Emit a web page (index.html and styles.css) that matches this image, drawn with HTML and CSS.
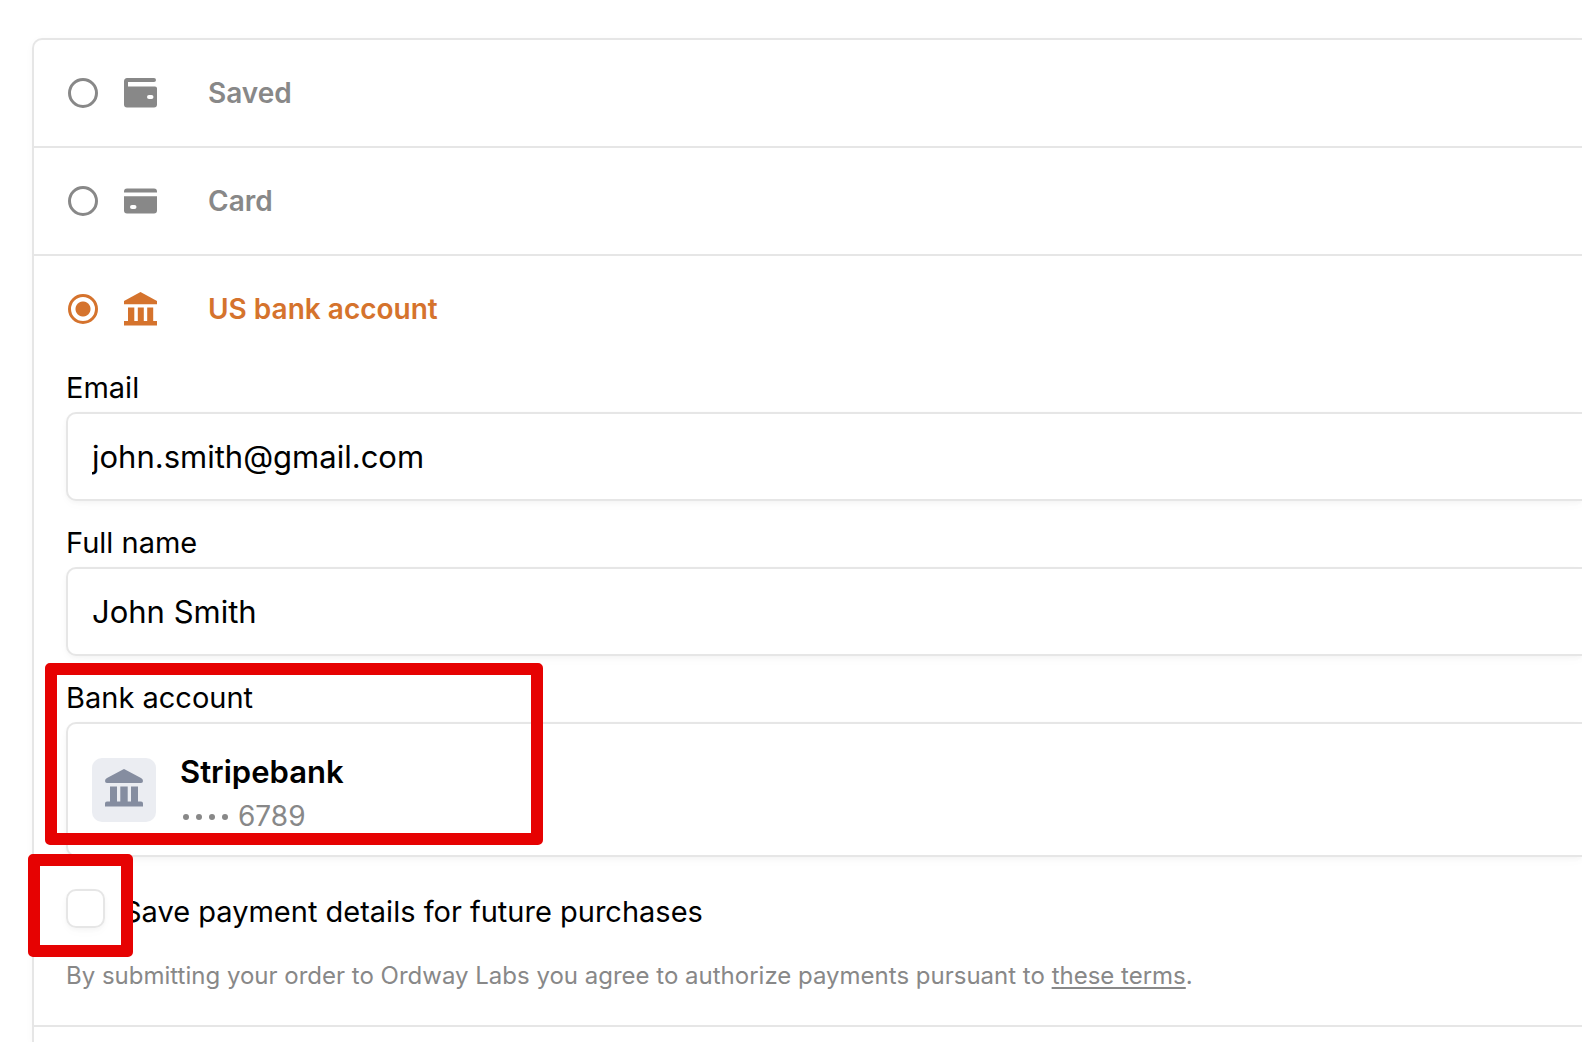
FILE: index.html
```html
<!DOCTYPE html>
<html lang="en">
<head>
<meta charset="utf-8">
<title>Payment method</title>
<link rel="stylesheet" href="styles.css">
</head>
<body>
<form class="panel">
  <label class="method">
    <input class="radio" type="radio" name="method">
    <svg class="icon" viewBox="0 0 34 36"><path d="M3.500 3H30a1.700 1.700 0 0 1 0 4H4V11.500H31A2.200 2.200 0 0 1 33 14V29.500A3 3 0 0 1 30 32.500H3A3 3 0 0 1 0 29.500V6A3 3 0 0 1 3.500 3ZM25 20a2 2 0 0 0 0 4h2.500a2 2 0 0 0 0-4Z" fill-rule="evenodd"/></svg>
    <span>Saved</span>
  </label>
  <label class="method">
    <input class="radio" type="radio" name="method">
    <svg class="icon" viewBox="0 0 34 36"><path d="M3 5.500H30A3 3 0 0 1 33 8.500V9.500H0V8.500A3 3 0 0 1 3 5.500ZM0 13.300H33V27.500A3 3 0 0 1 30 30.500H3A3 3 0 0 1 0 27.500ZM8 22a2 2 0 0 0 0 4h2.500a2 2 0 0 0 0-4Z" fill-rule="evenodd"/></svg>
    <span>Card</span>
  </label>
  <section class="open-method">
    <label class="method selected">
      <input class="radio" type="radio" name="method" checked>
      <svg class="icon" viewBox="0 0 34 36"><path d="M16.500 1 33 10V13.300H0V10Z"/><path d="M4 16.500h6.300V30h3.500V16.500h6V30h3.400V16.500h6V30H33v4.600H0V30h4Z"/></svg>
      <span>US bank account</span>
    </label>
    <div class="fields">
      <div class="field">
        <label class="label" for="email">Email</label>
        <input class="box text" id="email" type="text" value="john.smith@gmail.com">
      </div>
      <div class="field">
        <label class="label" for="name">Full name</label>
        <input class="box text" id="name" type="text" value="John Smith">
      </div>
      <div class="field">
        <div class="label">Bank account</div>
        <div class="box account">
          <div class="badge"><svg class="badge-icon" viewBox="0 0 38 42"><path d="M18 .400Q19-.200 20 .400L36 9Q38 10.200 38 12T36 14H2Q0 14 0 12T2 9Z"/><path d="M5 17.500h7v15h3.300v-15h7.400v15H26v-15h7v15h3q2 0 2 2v3H0v-3q0-2 2-2h3Z"/></svg></div>
          <div>
            <div class="bank-name">Stripebank</div>
            <div class="digits"><span class="dots"><i></i><i></i><i></i><i></i></span>6789</div>
          </div>
        </div>
        <div class="highlight highlight-account"></div>
      </div>
    </div>
    <div class="save">
      <input class="checkbox" id="save" type="checkbox">
      <label class="save-label" for="save">Save payment details for future purchases</label>
      <div class="highlight highlight-save"></div>
    </div>
    <p class="terms">By submitting your order to Ordway Labs you agree to authorize payments pursuant to <a href="#">these terms</a>.</p>
  </section>
</form>
</body>
</html>
```
FILE: styles.css
```css
* { box-sizing: border-box; }

body {
  margin: 0;
  padding: 38px 0 0 32px;
  min-height: 100vh;
  display: flex;
  background: #fff;
  color: #000;
  font-family: Inter, "Liberation Sans", sans-serif;
}

.panel {
  flex: 1;
  border: 2px solid #e6e6e6;
  border-width: 2px 0 0 2px;
  border-radius: 10px 0 0 0;
  box-shadow: 0 2px 8px rgba(0, 0, 0, .03);
}

.method {
  display: flex;
  align-items: center;
  height: 106px;
  padding-left: 34px;
  color: #888;
  font-size: 28px;
  font-weight: 600;
}

.panel > .method {
  height: 108px;
  border-bottom: 2px solid #e6e6e6;
}

.selected { color: #d5732d; }

.method .radio {
  appearance: none;
  width: 30px;
  height: 30px;
  margin: 0 26px 0 0;
  border: 3px solid currentColor;
  border-radius: 50%;
  color: inherit;
}

.radio:checked {
  background: radial-gradient(circle, currentColor 7px, transparent 8px);
}

.icon {
  width: 34px;
  height: 36px;
  margin-right: 50px;
  fill: currentColor;
}

.open-method {
  padding-bottom: 31px;
  border-bottom: 2px solid #e6e6e6;
}

.fields {
  display: grid;
  gap: 22px;
  padding: 6px 0 0 32px;
}

.field { position: relative; }

.label {
  display: block;
  margin-bottom: 4px;
  font-size: 29px;
  line-height: 40px;
}

.box {
  display: flex;
  width: 100%;
  border: 2px solid #e6e6e6;
  border-right: 0;
  border-radius: 10px 0 0 10px;
  background: #fff;
  box-shadow: 0 2px 4px rgba(0, 0, 0, .03), 0 4px 12px rgba(0, 0, 0, .02);
}

.text {
  height: 89px;
  padding: 0 24px;
  color: #000;
  font: inherit;
  font-size: 31px;
}

.account {
  gap: 24px;
  padding: 26px 24px 17px;
}

.badge {
  display: grid;
  place-items: center;
  width: 64px;
  height: 64px;
  margin-top: 8px;
  border-radius: 10px;
  background: #ebedf2;
}

.badge-icon {
  width: 38px;
  height: 42px;
  fill: #858da0;
}

.bank-name {
  font-size: 31px;
  font-weight: 600;
  line-height: 44px;
}

.digits {
  display: flex;
  align-items: center;
  gap: 10px;
  color: #888;
  font-size: 28px;
  line-height: 44px;
}

.dots {
  display: flex;
  gap: 7px;
  padding: 2px 0 0 3px;
}

.dots i {
  width: 6px;
  height: 6px;
  border-radius: 50%;
  background: currentColor;
}

.save {
  position: relative;
  display: flex;
  align-items: flex-start;
  gap: 18px;
  padding: 32px 0 0 32px;
}

.checkbox {
  appearance: none;
  width: 39px;
  height: 39px;
  margin: 0;
  border: 2px solid #e6e6e6;
  border-radius: 10px;
  box-shadow: 0 2px 4px rgba(0, 0, 0, .03), 0 4px 12px rgba(0, 0, 0, .02);
}

.save-label {
  font-size: 29px;
  line-height: 46px;
}

.terms {
  margin: 23px 0 0;
  padding-left: 32px;
  color: #888;
  font-size: 24px;
  line-height: 36px;
}

.terms a {
  color: inherit;
  text-decoration: underline;
  text-decoration-thickness: 2px;
  text-underline-offset: 3px;
  text-decoration-skip-ink: none;
}

.highlight {
  position: absolute;
  border: 12px solid #e60202;
  border-radius: 5px;
  pointer-events: none;
}

.highlight-account {
  top: -15px;
  left: -21px;
  width: 498px;
  height: 182px;
}

.highlight-save {
  top: -3px;
  left: -6px;
  width: 105px;
  height: 103px;
}
```
